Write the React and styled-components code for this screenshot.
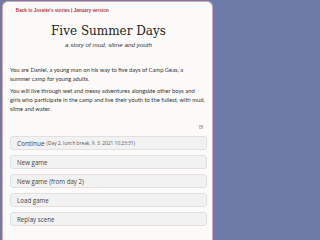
import React from 'react';
import styled, { createGlobalStyle } from 'styled-components';

const GlobalStyle = createGlobalStyle`
    html, body {
        margin: 0;
        padding: 0;
        background: #6d7ba6;
        overflow: hidden;
    }
    body {
        font-family: Lato, "Open Sans", sans-serif;
        color: #333;
    }
`;

const Card = styled.div`
    width: 211px;
    margin: 1px 0 0 2px;
    min-height: 240px;
    box-sizing: border-box;
    background: #fdfbfa;
    border: 1px solid #d4a7b1;
    border-bottom: none;
    border-radius: 6px 6px 0 0;
    padding: 5px 5px 0 7px;
`;

const BackLink = styled.a`
    display: block;
    font-family: "Liberation Sans", sans-serif;
    font-size: 4.6px;
    font-weight: 700;
    line-height: 8px;
    color: #b8363a;
    text-decoration: none;
`;

const Title = styled.h1`
    margin: 7px 0 0;
    text-align: center;
    font-family: "DejaVu Serif", serif;
    font-weight: 400;
    font-size: 12px;
    line-height: 18px;
    color: #222;
`;

const Subtitle = styled.div`
    text-align: center;
    font-family: "Liberation Sans", sans-serif;
    font-style: italic;
    font-size: 6.25px;
    line-height: 9px;
    color: #333;
`;

const Intro = styled.div`
    margin-top: 16px;
`;

const Paragraph = styled.p`
    margin: 0 0 3px;
    font-family: Lato, "Open Sans", sans-serif;
    font-size: 5.8px;
    line-height: 9px;
    color: #333;
`;

const IconRow = styled.div`
    display: flex;
    justify-content: flex-end;
    padding-right: 4px;
    margin-top: 11px;
    height: 6px;
    align-items: center;
`;

const Menu = styled.div`
    display: flex;
    flex-direction: column;
    gap: 5px;
    margin-top: 6px;
`;

const MenuButton = styled.div`
    height: 14px;
    box-sizing: border-box;
    display: flex;
    align-items: center;
    padding: 0 6px;
    background: #f3f2f2;
    border: 1px solid #e2e0e0;
    border-radius: 3px;
    font-family: "Open Sans", sans-serif;
    font-size: ${(p) => (p.$big ? '6.5px' : '6.2px')};
    color: #444;
    white-space: nowrap;
`;

const Meta = styled.span`
    font-size: 4.8px;
    margin-left: 2px;
    color: #555;
`;

const ExpandIcon = () => (
    <svg width="4" height="4" viewBox="0 0 4 4">
        <rect x="0.5" y="0.5" width="3" height="3" fill="none" stroke="#b5b5b5" strokeWidth="0.8" />
        <rect x="1.5" y="0" width="2.5" height="2.5" fill="#b5b5b5" />
    </svg>
);

const App = () => {
    const options = ['New game', 'New game (from day 2)', 'Load game', 'Replay scene'];

    return (
        <>
            <GlobalStyle />
            <Card>
                <BackLink href="#">← Back to Josette's stories | January version</BackLink>
                <Title>Five Summer Days</Title>
                <Subtitle>a story of mud, slime and youth</Subtitle>
                <Intro>
                    <Paragraph>
                        You are Daniel, a young man on his way to five days of Camp Geas, a<br />
                        summer camp for young adults.
                    </Paragraph>
                    <Paragraph>
                        You will live through wet and messy adventures alongside other boys and<br />
                        girls who participate in the camp and live their youth to the fullest, with mud,<br />
                        slime and water.
                    </Paragraph>
                </Intro>
                <IconRow>
                    <ExpandIcon />
                </IconRow>
                <Menu>
                    <MenuButton $big>
                        Continue<Meta>(Day 2, lunch break, 9. 3. 2021 10:23:31)</Meta>
                    </MenuButton>
                    {options.map((label) => (
                        <MenuButton key={label}>{label}</MenuButton>
                    ))}
                </Menu>
            </Card>
        </>
    );
};

export default App;
